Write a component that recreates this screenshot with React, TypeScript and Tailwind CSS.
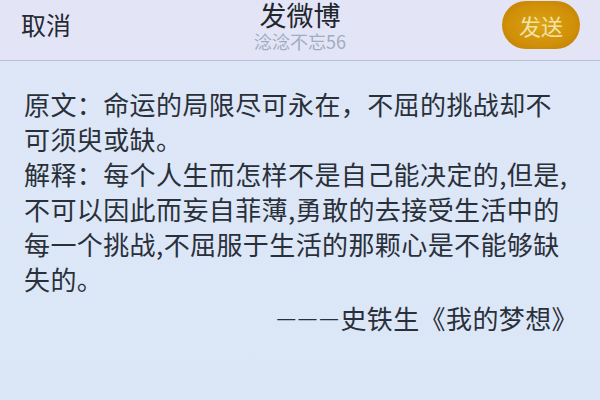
const lines = [
  "原文：命运的局限尽可永在，不屈的挑战却不",
  "可须臾或缺。",
  "解释：每个人生而怎样不是自己能决定的,但是,",
  "不可以因此而妄自菲薄,勇敢的去接受生活中的",
  "每一个挑战,不屈服于生活的那颗心是不能够缺",
  "失的。",
];

export default function App() {
  return (
    <div
      className="w-[600px] h-[400px] overflow-hidden bg-gradient-to-b from-[#dde7f8] to-[#dbe6f7] text-[#2a3039]"
      style={{ fontFamily: '"Noto Sans CJK SC", "Noto Sans", sans-serif' }}
    >
      {/* Header */}
      <div className="h-[61px] grid grid-cols-[1fr_auto_1fr] items-start bg-[#e3e5f7] border-b border-[#b9c1d6]">
        <div className="pl-[21px] pt-[9px] text-[25px] leading-[30px] text-[#262a32]">取消</div>
        <div className="flex flex-col items-center">
          <div className="text-[27px] leading-[29px] text-[#22262d]">发微博</div>
          <div className="text-[18px] leading-[24px] text-[#9fadc0]">淰淰不忘56</div>
        </div>
        <div className="flex justify-end pr-[20px] pt-[1px]">
          <div className="w-[78px] h-[48px] rounded-full bg-[radial-gradient(ellipse_at_center,_#dca214_0%,_#d09008_60%,_#bf7a02_100%)] flex items-center justify-center text-[22px] leading-none text-[#f1e3a6]">
            发送
          </div>
        </div>
      </div>

      {/* Body */}
      <div className="pt-[25px] pl-[24px] pr-[20px] text-[26px] leading-[35px] tracking-[0.4px]">
        {lines.map((l, i) => (
          <div key={i} className="whitespace-nowrap">
            {l}
          </div>
        ))}
        <div className="mt-[4px] pr-[2px] flex justify-end items-center whitespace-nowrap">
          <span className="flex gap-[3px] mr-[2px] text-[18px] leading-none font-['Liberation_Sans',sans-serif]">
            <span>—</span>
            <span>—</span>
            <span>—</span>
          </span>
          <span>史铁生《我的梦想》</span>
        </div>
      </div>
    </div>
  );
}
